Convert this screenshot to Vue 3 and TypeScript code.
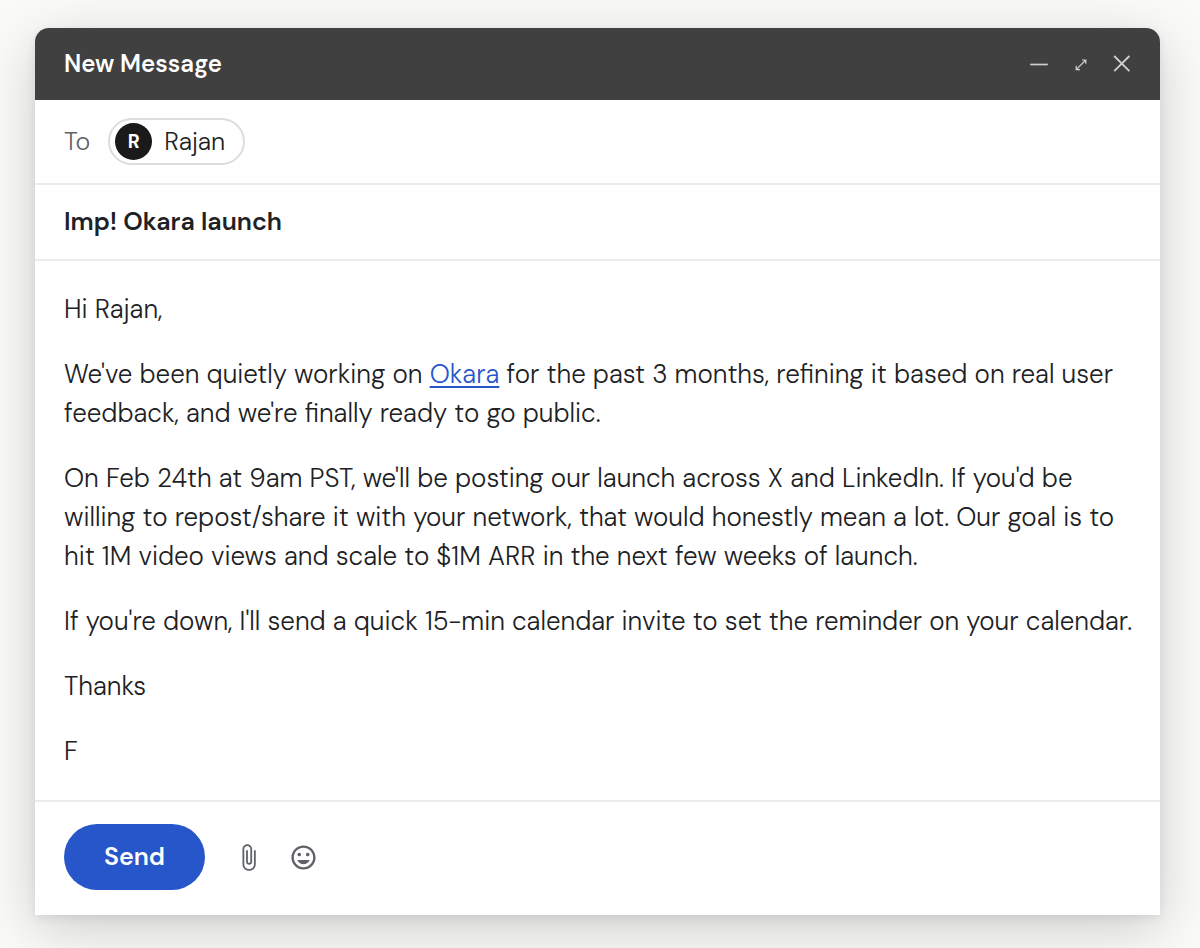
<script setup lang="ts">
import { ref } from 'vue'

interface Segment {
  text: string
  href?: string
}

const recipient = { name: 'Rajan', initial: 'R' }
const subject = ref('Imp! Okara launch')

const paragraphs: Segment[][] = [
  [{ text: 'Hi Rajan,' }],
  [
    { text: "We've been quietly working on " },
    { text: 'Okara', href: '#okara' },
    {
      text: " for the past 3 months, refining it based on real user feedback, and we're finally ready to go public.",
    },
  ],
  [
    {
      text: "On Feb 24th at 9am PST, we'll be posting our launch across X and LinkedIn. If you'd be willing to repost/share it with your network, that would honestly mean a lot. Our goal is to hit 1M video views and scale to $1M ARR in the next few weeks of launch.",
    },
  ],
  [
    {
      text: "If you're down, I'll send a quick 15-min calendar invite to set the reminder on your calendar.",
    },
  ],
  [{ text: 'Thanks' }],
  [{ text: 'F' }],
]
</script>

<template>
  <main class="page">
    <form class="composer" aria-labelledby="composer-title" @submit.prevent>
      <header class="titlebar">
        <h1 id="composer-title" class="title">New Message</h1>
        <div class="window-actions">
          <button type="button" class="icon-button" aria-label="Minimize">
            <svg class="window-icon" viewBox="0 0 20 20" aria-hidden="true">
              <path d="M0.2 10.5H17.8" stroke-width="1.7" />
            </svg>
          </button>
          <button type="button" class="icon-button" aria-label="Expand">
            <svg class="window-icon" viewBox="0 0 20 20" aria-hidden="true">
              <path
                d="M5.2 15.6L14.8 6M11 6H14.8V9.8M5.2 11.8V15.6H9"
                stroke-width="1.2"
              />
            </svg>
          </button>
          <button type="button" class="icon-button" aria-label="Close">
            <svg class="window-icon" viewBox="0 0 20 20" aria-hidden="true">
              <path d="M2.2 2L17.4 17.2M17.4 2L2.2 17.2" stroke-width="1.8" />
            </svg>
          </button>
        </div>
      </header>

      <div class="recipients">
        <span class="to-label">To</span>
        <span class="chip">
          <span class="avatar" aria-hidden="true">{{ recipient.initial }}</span>
          <span>{{ recipient.name }}</span>
        </span>
      </div>

      <div class="subject-row">
        <input v-model="subject" class="subject" type="text" aria-label="Subject" />
      </div>

      <div class="body">
        <p v-for="(segments, i) in paragraphs" :key="i" class="paragraph">
          <template v-for="(segment, j) in segments" :key="j">
            <a v-if="segment.href" class="link" :href="segment.href">{{ segment.text }}</a>
            <template v-else>{{ segment.text }}</template>
          </template>
        </p>
      </div>

      <footer class="toolbar">
        <button type="submit" class="send">Send</button>
        <div class="attachments">
          <button type="button" class="icon-button" aria-label="Attach file">
            <svg class="tool-icon" viewBox="0 0 24 24" aria-hidden="true">
              <path
                d="M16.5 6v11.5c0 2.21-1.79 4-4 4s-4-1.79-4-4V5c0-1.38 1.12-2.5 2.5-2.5s2.5 1.12 2.5 2.5v10.5c0 .55-.45 1-1 1s-1-.45-1-1V6H10v9.5c0 1.38 1.12 2.5 2.5 2.5s2.5-1.12 2.5-2.5V5c0-2.21-1.79-4-4-4S7 2.79 7 5v12.5c0 3.04 2.46 5.5 5.5 5.5s5.5-2.46 5.5-5.5V6h-1.5z"
              />
            </svg>
          </button>
          <button type="button" class="icon-button" aria-label="Insert emoji">
            <svg class="tool-icon" viewBox="0 0 24 24" aria-hidden="true">
              <path
                d="M11.99 2C6.47 2 2 6.48 2 12s4.47 10 9.99 10C17.52 22 22 17.52 22 12S17.52 2 11.99 2zM12 20c-4.42 0-8-3.58-8-8s3.58-8 8-8 8 3.58 8 8-3.58 8-8 8zm3.5-9c.83 0 1.5-.67 1.5-1.5S16.33 8 15.5 8 14 8.67 14 9.5s.67 1.5 1.5 1.5zm-7 0c.83 0 1.5-.67 1.5-1.5S9.33 8 8.5 8 7 8.67 7 9.5 7.67 11 8.5 11zm3.5 6.5c2.33 0 4.31-1.46 5.11-3.5H6.89c.8 2.04 2.78 3.5 5.11 3.5z"
              />
            </svg>
          </button>
        </div>
      </footer>
    </form>
  </main>
</template>

<style>
body {
  background: #fafaf8;
}
</style>

<style scoped>
.page {
  box-sizing: border-box;
  min-height: 100vh;
  padding: 28px 40px 33px 35px;
  overflow: hidden;
  font-family: 'DM Sans', Inter, 'Liberation Sans', sans-serif;
  font-size: 25px;
  color: #202124;
}

.composer {
  background: #fff;
  border-radius: 14px 14px 0 0;
  box-shadow:
    0 14px 56px rgba(0, 0, 0, 0.18),
    0 3px 10px rgba(0, 0, 0, 0.08);
}

.titlebar {
  display: flex;
  align-items: center;
  justify-content: space-between;
  height: 72px;
  padding: 0 28px 0 29px;
  border-radius: 14px 14px 0 0;
  background: #404040;
  color: #fff;
}

.title {
  margin: 0;
  padding-bottom: 2px;
  font-size: 24px;
  font-weight: 600;
}

.window-actions {
  display: flex;
  gap: 21px;
}

.icon-button {
  display: block;
  padding: 0;
  border: 0;
  background: none;
  cursor: pointer;
}

.window-icon {
  display: block;
  width: 20px;
  height: 20px;
  fill: none;
  stroke: #cfcfcf;
}

.recipients {
  display: flex;
  align-items: center;
  gap: 18px;
  padding: 18px 29px;
  border-bottom: 2px solid #ebebeb;
  font-weight: 300;
}

.to-label {
  color: #5f6368;
}

.chip {
  display: flex;
  align-items: center;
  gap: 12px;
  box-sizing: border-box;
  height: 47px;
  padding: 0 18px 0 5px;
  border: 2px solid #dadce0;
  border-radius: 24px;
}

.avatar {
  display: grid;
  place-items: center;
  width: 37px;
  height: 37px;
  border-radius: 50%;
  background: #1a1a1a;
  color: #fff;
  font-size: 19px;
  font-weight: 700;
}

.subject-row {
  padding: 18px 29px;
  border-bottom: 2px solid #ebebeb;
}

.subject {
  display: block;
  box-sizing: border-box;
  width: 100%;
  height: 38px;
  padding: 0 0 2px;
  border: 0;
  outline: 0;
  background: none;
  color: inherit;
  font: inherit;
  font-weight: 600;
}

.body {
  padding: 29px 22px 29px 29px;
  font-size: 26px;
  font-weight: 300;
  line-height: 39px;
}

.paragraph {
  margin: 0 0 26px;
}

.paragraph:last-child {
  margin-bottom: 0;
}

.link {
  color: #2756cb;
  text-decoration: underline;
  text-decoration-thickness: 2px;
  text-underline-offset: 3px;
}

.toolbar {
  display: flex;
  align-items: center;
  gap: 29px;
  padding: 22px 29px 25px;
  border-top: 2px solid #ebebeb;
}

.send {
  height: 66px;
  padding: 0 40px 2px;
  border: 0;
  border-radius: 33px;
  background: #2756cb;
  color: #fff;
  font: inherit;
  font-weight: 600;
  cursor: pointer;
}

.attachments {
  display: flex;
  gap: 26px;
}

.tool-icon {
  display: block;
  width: 29px;
  height: 29px;
  fill: #5f6368;
}
</style>
